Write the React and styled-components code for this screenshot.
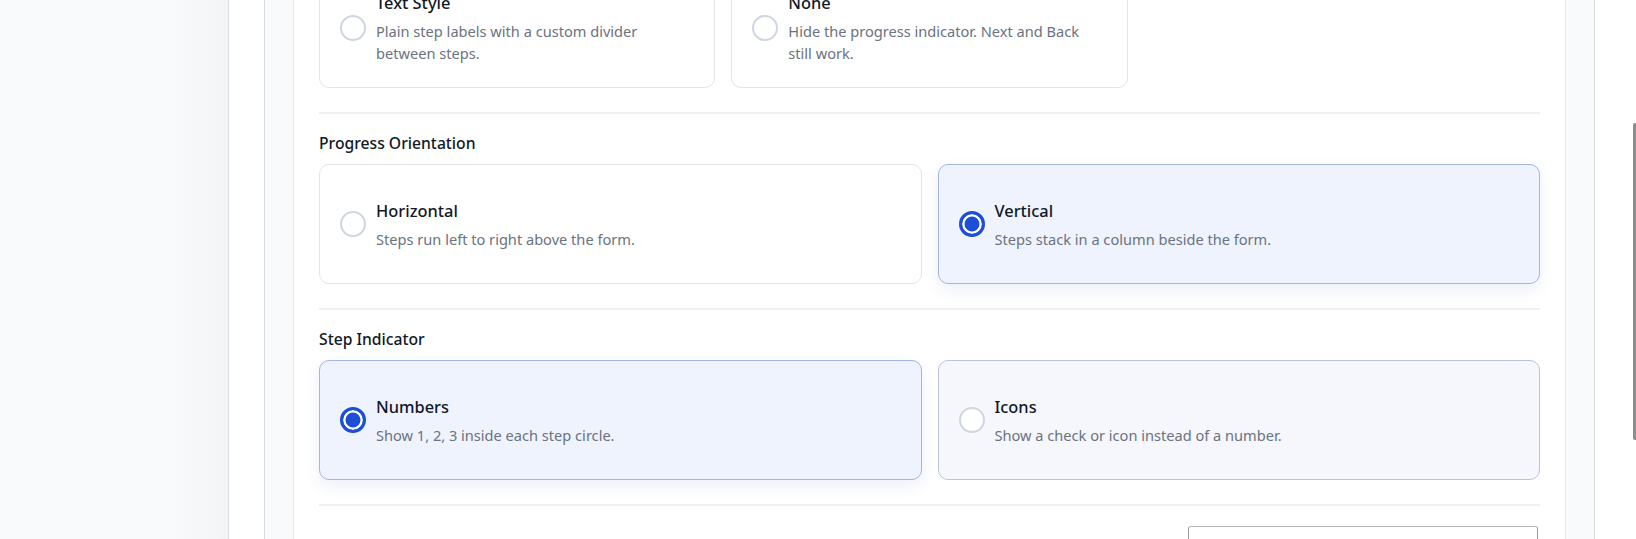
import React, { useState } from "react";
import styled, { createGlobalStyle } from "styled-components";

const GlobalStyle = createGlobalStyle`
    html, body {
        margin: 0;
        padding: 0;
        height: 100%;
        overflow: hidden;
        font-family: "Noto Sans", "Open Sans", sans-serif;
        color: #111827;
    }
    * {
        box-sizing: border-box;
    }
`;

const Shell = styled.div`
    display: flex;
    height: 100vh;
    overflow: hidden;
`;

const Sidebar = styled.aside`
    width: 229px;
    flex-shrink: 0;
    background: linear-gradient(to right, #f8fafc 75%, #f2f4f6);
    border-right: 1px solid #d9dce1;
`;

const Main = styled.main`
    flex: 1;
    position: relative;
    background: #ffffff;
    padding: 0 41px 0 35px;
    overflow: hidden;
`;

const ScrollThumb = styled.div`
    position: absolute;
    top: 123px;
    right: 0;
    width: 3px;
    height: 317px;
    border-radius: 2px 0 0 2px;
    background: #8d8d8d;
`;

const PreviewFrame = styled.div`
    margin-top: -89px;
    background: #f9fafb;
    border: 1px solid #d6d9de;
    padding: 28px;
`;

const FormCard = styled.div`
    background: #ffffff;
    border: 1px solid #e6e8eb;
    padding: 26px 25px 60px;
`;

const Section = styled.section`
    margin-top: 24px;
    padding-top: 19px;
    border-top: 2px solid #eef0f3;
`;

const SectionLabel = styled.div`
    font-size: 15.7px;
    line-height: 20px;
    font-weight: 500;
    color: #111827;
    margin-bottom: 11px;
`;

const OptionGrid = styled.div`
    display: grid;
    grid-template-columns: repeat(${(p) => p.$cols}, 1fr);
    gap: 16px;
`;

const OptionCard = styled.label`
    display: flex;
    align-items: center;
    gap: 10px;
    min-height: 120px;
    padding: 23px 28px 23px 20px;
    border-radius: 10px;
    cursor: pointer;
    border: 1px solid
        ${(p) => (p.$selected ? "#a6b5dd" : p.$tinted ? "#b9c3dc" : "#e1e4e8")};
    background: ${(p) =>
        p.$selected ? "#eff3fe" : p.$tinted ? "#f5f7fd" : "#ffffff"};
    box-shadow: ${(p) =>
        p.$selected ? "0 6px 16px rgba(30, 64, 175, 0.08)" : "none"};
`;

const Radio = styled.span`
    flex-shrink: 0;
    width: 26px;
    height: 26px;
    border-radius: 50%;
    border: ${(p) => (p.$checked ? "3px solid #1d4ed8" : "2px solid #cfd6e2")};
    background: ${(p) => (p.$checked ? "#1d4ed8" : "#ffffff")};
    box-shadow: ${(p) => (p.$checked ? "inset 0 0 0 2.5px #ffffff" : "none")};
`;

const OptionText = styled.div`
    display: flex;
    flex-direction: column;
    gap: 5px;
    min-width: 0;
`;

const OptionTitle = styled.div`
    font-size: 16.4px;
    line-height: 24px;
    font-weight: 500;
    color: #111827;
`;

const OptionHint = styled.div`
    font-size: 14.6px;
    line-height: 22px;
    color: #6b7280;
`;

const FooterRow = styled.div`
    display: flex;
    justify-content: flex-end;
    margin-top: 24px;
    padding-top: 20px;
    border-top: 2px solid #eef0f3;
`;

const SelectBox = styled.div`
    width: 350px;
    height: 36px;
    margin-right: 2px;
    border: 1px solid #9a9a9a;
    border-top-color: #b8b8b8;
    border-radius: 3px;
    background: #ffffff;
`;

const styleOptions = [
    {
        id: "text",
        title: "Text Style",
        hint: "Plain step labels with a custom divider between steps.",
    },
    {
        id: "none",
        title: "None",
        hint: "Hide the progress indicator. Next and Back still work.",
    },
];

const orientationOptions = [
    { id: "horizontal", title: "Horizontal", hint: "Steps run left to right above the form." },
    { id: "vertical", title: "Vertical", hint: "Steps stack in a column beside the form." },
];

const indicatorOptions = [
    { id: "numbers", title: "Numbers", hint: "Show 1, 2, 3 inside each step circle." },
    { id: "icons", title: "Icons", hint: "Show a check or icon instead of a number." },
];

function OptionGroup({ options, value, onChange, cols, tinted }) {
    return (
        <OptionGrid $cols={cols}>
            {options.map((opt) => (
                <OptionCard
                    key={opt.id}
                    $selected={value === opt.id}
                    $tinted={tinted && value !== opt.id}
                    onClick={() => onChange(opt.id)}
                >
                    <Radio $checked={value === opt.id} />
                    <OptionText>
                        <OptionTitle>{opt.title}</OptionTitle>
                        <OptionHint>{opt.hint}</OptionHint>
                    </OptionText>
                </OptionCard>
            ))}
        </OptionGrid>
    );
}

export default function App() {
    const [progressStyle, setProgressStyle] = useState("circles");
    const [orientation, setOrientation] = useState("vertical");
    const [indicator, setIndicator] = useState("numbers");

    return (
        <>
            <GlobalStyle />
            <Shell>
                <Sidebar />
                <Main>
                    <PreviewFrame>
                        <FormCard>
                            <OptionGroup
                                options={styleOptions}
                                value={progressStyle}
                                onChange={setProgressStyle}
                                cols={3}
                            />

                            <Section>
                                <SectionLabel>Progress Orientation</SectionLabel>
                                <OptionGroup
                                    options={orientationOptions}
                                    value={orientation}
                                    onChange={setOrientation}
                                    cols={2}
                                />
                            </Section>

                            <Section>
                                <SectionLabel>Step Indicator</SectionLabel>
                                <OptionGroup
                                    options={indicatorOptions}
                                    value={indicator}
                                    onChange={setIndicator}
                                    cols={2}
                                    tinted
                                />
                            </Section>

                            <FooterRow>
                                <SelectBox />
                            </FooterRow>
                        </FormCard>
                    </PreviewFrame>
                    <ScrollThumb />
                </Main>
            </Shell>
        </>
    );
}
